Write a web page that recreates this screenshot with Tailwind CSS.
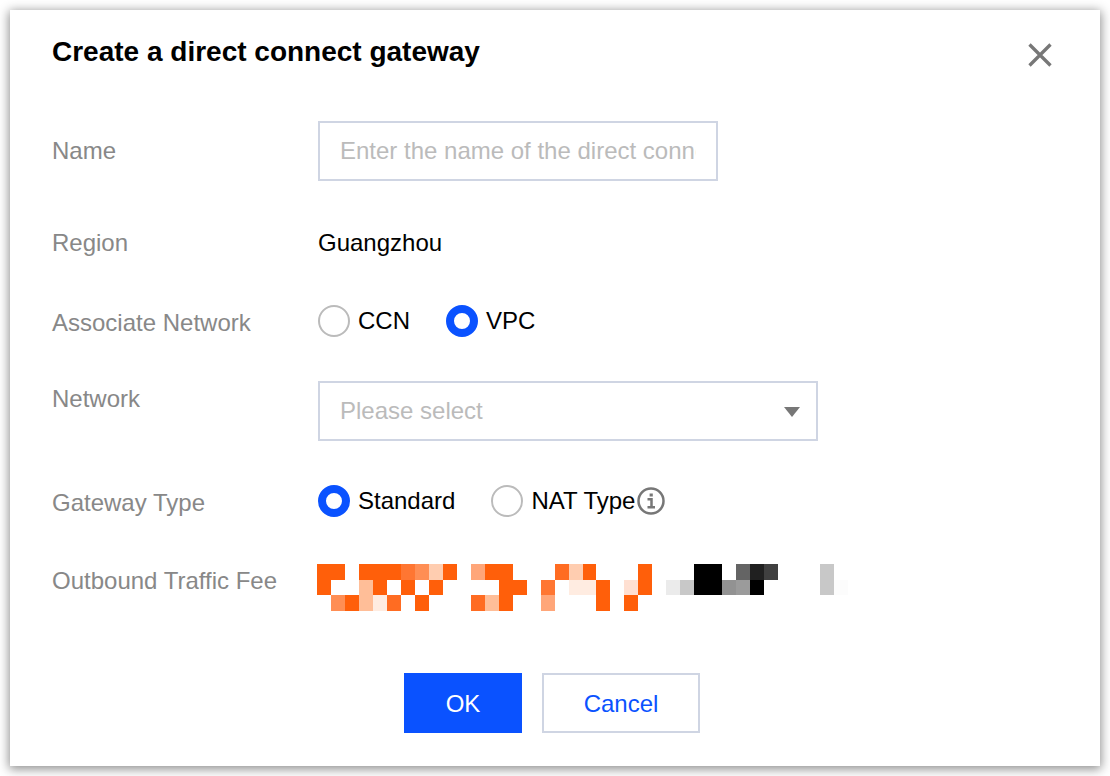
<!DOCTYPE html>
<html lang="en">
<head>
<meta charset="utf-8">
<meta name="viewport" content="width=device-width, initial-scale=1">
<title>Create a direct connect gateway</title>
<script src="https://cdn.jsdelivr.net/npm/@tailwindcss/browser@4"></script>
</head>
<body class="bg-white p-2.5 font-['Liberation_Sans',Arial,sans-serif] text-2xl/9 text-black">
<main role="dialog" aria-labelledby="title" class="bg-white pt-6 pr-12 pb-[33px] pl-[42px] shadow-[0_2px_10px_1px_rgba(0,0,0,0.45)]">
  <header class="flex items-start justify-between">
    <h1 id="title" class="text-[28px]/9 font-bold">Create a direct connect gateway</h1>
    <button type="button" aria-label="Close" class="mt-[9px] text-[#777]">
      <svg class="block size-6" viewBox="0 0 24 24" fill="none" stroke="currentColor" stroke-width="3.300"><path d="M1.500 1.500 22.500 22.500M22.500 1.500 1.500 22.500"/></svg>
    </button>
  </header>

  <form class="mt-[51px]">
    <div class="flex items-center">
      <label for="name" class="w-[266px] shrink-0 text-[#888]">Name</label>
      <input id="name" type="text" placeholder="Enter the name of the direct connect gateway" class="h-[60px] w-[400px] min-w-0 border-2 border-[#cfd5e3] bg-white px-5 outline-none placeholder:text-[#bbb]">
    </div>

    <div class="mt-11 flex">
      <span class="w-[266px] shrink-0 text-[#888]">Region</span>
      <span>Guangzhou</span>
    </div>

    <div role="radiogroup" aria-labelledby="assoc" class="mt-[42px] flex h-9">
      <span id="assoc" class="w-[266px] shrink-0 pt-0.5 text-[#888]">Associate Network</span>
      <div class="flex items-center gap-9">
        <label class="flex items-center gap-2"><input type="radio" name="assoc" class="size-8 appearance-none rounded-full border-2 border-[#bbb] bg-white checked:border-8 checked:border-[#0a52ff]">CCN</label>
        <label class="flex items-center gap-2"><input type="radio" name="assoc" checked class="size-8 appearance-none rounded-full border-2 border-[#bbb] bg-white checked:border-8 checked:border-[#0a52ff]">VPC</label>
      </div>
    </div>

    <div class="mt-[42px] flex items-start">
      <label for="network" class="w-[266px] shrink-0 text-[#888]">Network</label>
      <div class="relative w-[500px]">
        <select id="network" class="block h-[60px] w-full appearance-none border-2 border-[#cfd5e3] bg-white px-5 text-[#bbb] outline-none">
          <option>Please select</option>
        </select>
        <svg class="pointer-events-none absolute top-[26px] right-[18px] h-2.5 w-4 text-[#777]" viewBox="0 0 16 10" fill="currentColor"><path d="M0 0h16L8 10z"/></svg>
      </div>
    </div>

    <div role="radiogroup" aria-labelledby="gwtype" class="mt-[42px] flex h-9">
      <span id="gwtype" class="w-[266px] shrink-0 pt-0.5 text-[#888]">Gateway Type</span>
      <div class="flex items-center gap-9">
        <label class="flex items-center gap-2"><input type="radio" name="gwtype" checked class="size-8 appearance-none rounded-full border-2 border-[#bbb] bg-white checked:border-8 checked:border-[#0a52ff]">Standard</label>
        <div class="flex items-center gap-0.5">
          <label class="flex items-center gap-2"><input type="radio" name="gwtype" class="size-8 appearance-none rounded-full border-2 border-[#bbb] bg-white checked:border-8 checked:border-[#0a52ff]">NAT Type</label>
          <svg class="size-7 text-[#777]" viewBox="0 0 28 28" fill="none" stroke="currentColor" stroke-width="2.500" role="img" aria-label="More information"><circle cx="14" cy="14" r="12.500"/><path d="M10.500 12.200H14.500V20M10.500 20.200H18"/><path d="M12.600 8H15.800" stroke-width="3"/></svg>
        </div>
      </div>
    </div>

    <div class="mt-11 flex items-start">
      <span class="w-[265px] shrink-0 text-[#888]">Outbound Traffic Fee</span>
      <!-- Fee amount, masked as a mosaic -->
      <svg class="mt-px h-[47px] w-[531px] min-w-0" viewBox="0 0 38 3" preserveAspectRatio="none" shape-rendering="crispEdges" role="img" aria-label="Hidden fee">
        <path fill="#ff5f0a" d="M0 0h2v1h-1v1h-1zM3 0h3v1h-1v1h-1v-1h-1zM9 0h1v1h-1zM6 1h1v1h-1zM8 1h1v1h-1zM2 2h1v1h-1zM7 2h1v1h-1zM12 0h2v1h1v1h-1v1h-1v-2h-1zM19 0h1v1h-1zM20 1h1v2h-1zM23 0h1v2h-1zM22 2h1v1h-1z"/>
        <path fill="#ff6c22" d="M17 0h1v1h-1zM5 2h1v1h-1zM11 2h1v1h-1z"/>
        <path fill="#ff7632" d="M6 0h1v1h-1zM16 1h1v1h-1z"/>
        <path fill="#ff8e54" d="M7 0h1v1h-1zM1 2h1v1h-1z"/>
        <path fill="#ffa679" d="M11 0h1v1h-1zM16 2h1v1h-1z"/>
        <path fill="#ffbe98" d="M3 1h1v2h-1zM12 2h1v1h-1z"/>
        <path fill="#ffcdb0" d="M8 0h1v1h-1zM18 0h1v1h-1z"/>
        <path fill="#ffe0d2" d="M22 1h1v1h-1z"/>
        <path fill="#ffece1" d="M18 1h2v1h-2zM4 2h1v1h-1z"/>
        <path fill="#000" d="M27 0h2v2h-2zM31 1h1v1h-1z"/>
        <path fill="#202020" d="M31 0h1v1h-1z"/>
        <path fill="#404040" d="M32 0h1v1h-1z"/>
        <path fill="#646464" d="M30 0h1v1h-1z"/>
        <path fill="#929292" d="M29 1h1v1h-1z"/>
        <path fill="#9b9b9b" d="M30 1h1v1h-1z"/>
        <path fill="#c8c8c8" d="M26 1h1v1h-1zM36 0h1v2h-1z"/>
        <path fill="#ebebeb" d="M25 1h1v1h-1z"/>
        <path fill="#fcfcfc" d="M37 1h1v1h-1z"/>
      </svg>
    </div>

    <div class="mt-[62px] flex justify-center gap-5">
      <button type="button" class="h-[60px] w-[118px] bg-[#0a52ff] pt-0.5 text-white">OK</button>
      <button type="button" class="h-[60px] w-[158px] border-2 border-[#cfd5e3] bg-white pt-0.5 text-[#0a52ff]">Cancel</button>
    </div>
  </form>
</main>
</body>
</html>
